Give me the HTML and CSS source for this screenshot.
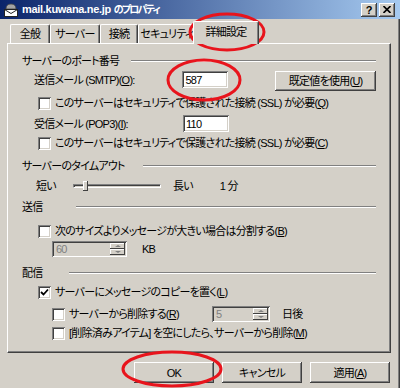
FILE: index.html
```html
<!DOCTYPE html>
<html lang="ja">
<head>
  <meta charset="UTF-8">
  <title>mail.kuwana.ne.jp のプロパティ</title>
  <link rel="stylesheet" href="styles.css">
</head>

<body>
  <div class="window">
    <div class="titlebar">
      <svg class="title-icon" width="16" height="16" viewBox="0 0 16 16">
        <path d="M3 7 Q3 2 8 2 Q13 2 13 7 Z" fill="#a4a4a4" stroke="#444" stroke-width="0.8"/>
        <rect x="1.5" y="7.5" width="13" height="7" fill="#fff" stroke="#222"/>
        <path d="M1.5 7.5 L8 11.5 L14.5 7.5" fill="none" stroke="#222"/>
      </svg>
      <span class="title">mail.kuwana.ne.jp <span class="title-ja">のプロパティ</span></span>
      <div class="caption">
        <span class="cap-btn">?</span>
        <span class="cap-btn">
          <svg width="8" height="7" viewBox="0 0 8 7"><path d="M0.5 0 L7.5 7 M7.5 0 L0.5 7" stroke="#000" stroke-width="1.6"/></svg>
        </span>
      </div>
    </div>

    <div class="tabs">
      <div class="tab tab-general">全般</div>
      <div class="tab tab-server">サーバー</div>
      <div class="tab tab-connect">接続</div>
      <div class="tab tab-security">セキュリティ</div>
      <div class="tab active">詳細設定</div>
    </div>

    <div class="panel">
      <!-- server ports -->
      <div class="group-head">
        <span>サーバーのポート番号</span>
        <div class="rule rule-port"></div>
      </div>
      <div class="port-row smtp">
        <span class="port-label">送信メール (SMTP)(<u>O</u>):</span>
        <div class="edit">587</div>
        <div class="btn default-btn">既定値を使用(<u>U</u>)</div>
      </div>
      <div class="check-row ssl-smtp">
        <span class="checkbox"></span>
        <span>このサーバーはセキュリティで保護された接続 (SSL) が必要(<u>Q</u>)</span>
      </div>
      <div class="port-row pop3">
        <span class="port-label">受信メール (POP3)(<u>I</u>):</span>
        <div class="edit">110</div>
      </div>
      <div class="check-row ssl-pop3">
        <span class="checkbox"></span>
        <span>このサーバーはセキュリティで保護された接続 (SSL) が必要(<u>C</u>)</span>
      </div>

      <!-- timeout -->
      <div class="group-head timeout-head">
        <span>サーバーのタイムアウト</span>
        <div class="rule rule-timeout"></div>
      </div>
      <div class="slider-row">
        <span>短い</span>
        <div class="slider">
          <div class="track"></div>
          <div class="thumb"></div>
        </div>
        <span>長い</span>
        <span class="slider-value">1 分</span>
      </div>

      <!-- sending -->
      <div class="group-head send-head">
        <span>送信</span>
        <div class="rule rule-send"></div>
      </div>
      <div class="check-row split-check">
        <span class="checkbox"></span>
        <span>次のサイズよりメッセージが大きい場合は分割する(<u>B</u>)</span>
      </div>
      <div class="spin-row size-row">
        <div class="spinner size-spin">
          <span class="spin-text">60</span>
          <div class="spin-btns">
            <span class="spin-btn"><i class="up"></i></span>
            <span class="spin-btn"><i class="down"></i></span>
          </div>
        </div>
        <span class="unit">KB</span>
      </div>

      <!-- delivery -->
      <div class="group-head deliver-head">
        <span>配信</span>
        <div class="rule rule-deliver"></div>
      </div>
      <div class="check-row keep-copy">
        <span class="checkbox checked">
          <svg width="9" height="9" viewBox="0 0 9 9"><path d="M1 4 L3.5 6.5 L8 1.5" fill="none" stroke="#000" stroke-width="1.8"/></svg>
        </span>
        <span>サーバーにメッセージのコピーを置く(<u>L</u>)</span>
      </div>
      <div class="check-row sub-row remove-days">
        <div class="sub-label">
          <span class="checkbox"></span>
          <span>サーバーから削除する(<u>R</u>)</span>
        </div>
        <div class="spinner days-spin">
          <span class="spin-text">5</span>
          <div class="spin-btns">
            <span class="spin-btn"><i class="up"></i></span>
            <span class="spin-btn"><i class="down"></i></span>
          </div>
        </div>
        <span class="unit">日後</span>
      </div>
      <div class="check-row sub-row remove-trash">
        <span class="checkbox"></span>
        <span>[削除済みアイテム] を空にしたら、サーバーから削除(<u>M</u>)</span>
      </div>
    </div>

    <div class="dialog-buttons">
      <div class="btn">OK</div>
      <div class="btn">キャンセル</div>
      <div class="btn">適用(<u>A</u>)</div>
    </div>

    <!-- red marks drawn over the screenshot -->
    <svg class="marks" width="400" height="388" viewBox="0 0 400 388">
      <ellipse cx="227" cy="32" rx="37" ry="18"/>
      <ellipse cx="204" cy="80" rx="36" ry="20"/>
      <ellipse cx="172" cy="369" rx="49" ry="17"/>
    </svg>
  </div>
</body>
</html>
```

FILE: styles.css
```css
* {
  box-sizing: border-box;
}

body {
  margin: 0;
  padding: 0;
  font-family: "Liberation Sans", "Noto Sans CJK JP", sans-serif;
  font-size: 11px;
  line-height: 14px;
  letter-spacing: -0.75px;
  font-feature-settings: "palt";
  color: #000;
  background-color: #d4d0c8;
}

u {
  text-decoration: underline;
}

.window {
  position: relative;
  width: 400px;
  height: 388px;
  background-color: #d4d0c8;
  display: flex;
  flex-direction: column;
  overflow: hidden;
  box-shadow: inset -1px 0 #404040, inset -2px 0 #808080;
}

/* title bar */
.titlebar {
  height: 19px;
  display: flex;
  align-items: center;
  padding: 0 5px 0 3px;
  background: linear-gradient(90deg, #0a246a, #a6caf0);
}

.title-icon {
  flex: none;
}

.title {
  margin-left: 3px;
  color: #fff;
  font-weight: bold;
  font-size: 11px;
  letter-spacing: -0.3px;
  white-space: nowrap;
}

.title-ja {
  font-size: 10px;
  letter-spacing: -1.8px;
}

.caption {
  margin-left: auto;
  display: flex;
  gap: 2px;
}

.cap-btn {
  width: 16px;
  height: 14px;
  display: flex;
  align-items: center;
  justify-content: center;
  background-color: #d4d0c8;
  font-weight: bold;
  font-size: 11px;
  letter-spacing: 0;
  box-shadow: inset -1px -1px #404040, inset 1px 1px #fff, inset -2px -2px #808080;
}

/* tabs */
.tabs {
  height: 24px;
  display: flex;
  align-items: flex-end;
  padding-left: 10px;
}

.tab {
  flex: none;
  height: 19px;
  line-height: 18px;
  text-align: center;
  white-space: nowrap;
  border-top: 1px solid #fff;
  border-left: 1px solid #fff;
  border-right: 1px solid #404040;
  border-radius: 2px 2px 0 0;
  box-shadow: inset -1px 0 #808080;
}

.tab-general { width: 40px; }
.tab-server { width: 50px; }
.tab-connect { width: 38px; }
.tab-security { width: 57px; }

.tab.active {
  position: relative;
  z-index: 1;
  width: 66px;
  height: 23px;
  margin: 0 0 -1px -2px;
  line-height: 20px;
  background-color: #d4d0c8;
}

/* panel */
.panel {
  height: 310px;
  margin: 0 9px 0 7px;
  padding: 10px 14px 0 14px;
  border-top: 1px solid #fff;
  border-left: 1px solid #fff;
  border-right: 1px solid #404040;
  border-bottom: 1px solid #404040;
  box-shadow: inset -1px -1px #808080;
}

.group-head {
  height: 14px;
  display: flex;
  align-items: center;
}

.rule {
  flex: 1;
  height: 2px;
  border-top: 1px solid #808080;
  border-bottom: 1px solid #fff;
}

.rule-port { margin-left: 12px; }
.rule-timeout { margin-left: 18px; }
.rule-send { margin-left: 33px; }
.rule-deliver { margin-left: 26px; }

.timeout-head { margin-top: 9px; }
.send-head { margin-top: 7px; }
.deliver-head { margin-top: 9px; }

/* port rows */
.port-row {
  display: flex;
  align-items: flex-start;
  padding-left: 12px;
}

.smtp {
  height: 20px;
  margin-top: 3px;
}

.pop3 {
  height: 17px;
  margin-top: 5px;
}

.port-label {
  width: 149px;
  line-height: 18px;
  white-space: nowrap;
}

.edit {
  width: 46px;
  height: 17px;
  padding: 2px 3px 0;
  line-height: 14px;
  background-color: #fff;
  box-shadow: inset 1px 1px #808080, inset -1px -1px #fff, inset 2px 2px #404040, inset -2px -2px #d4d0c8;
}

.btn {
  height: 21px;
  width: 80px;
  display: flex;
  align-items: center;
  justify-content: center;
  white-space: nowrap;
  background-color: #d4d0c8;
  box-shadow: inset -1px -1px #404040, inset 1px 1px #fff, inset -2px -2px #808080;
}

.default-btn {
  width: 101px;
  height: 20px;
  margin-left: 47px;
}

/* check rows */
.check-row {
  height: 14px;
  display: flex;
  align-items: center;
  padding-left: 16px;
  white-space: nowrap;
}

.checkbox {
  flex: none;
  width: 13px;
  height: 13px;
  margin-right: 4px;
  display: flex;
  align-items: center;
  justify-content: center;
  background-color: #fff;
  box-shadow: inset 1px 1px #808080, inset -1px -1px #fff, inset 2px 2px #404040, inset -2px -2px #d4d0c8;
}

.ssl-smtp { margin-top: 5px; }
.ssl-pop3 { margin-top: 4px; }
.split-check { margin-top: 10px; }
.keep-copy { margin-top: 5px; }

.sub-row {
  padding-left: 30px;
}

.remove-days {
  height: 16px;
  margin-top: 7px;
}

.remove-trash { margin-top: 4px; }

.sub-label {
  width: 160px;
  display: flex;
  align-items: center;
}

/* slider */
.slider-row {
  height: 14px;
  margin-top: 6px;
  padding-left: 14px;
  display: flex;
  align-items: center;
}

.slider {
  position: relative;
  width: 88px;
  height: 12px;
  margin: 0 12px 0 17px;
  display: flex;
  align-items: center;
}

.track {
  width: 100%;
  height: 4px;
  border-top: 1px solid #808080;
  border-left: 1px solid #808080;
  border-bottom: 1px solid #fff;
  border-right: 1px solid #fff;
  box-shadow: inset 1px 1px #404040;
}

.thumb {
  position: absolute;
  left: 10px;
  top: 1px;
  width: 5px;
  height: 10px;
  background-color: #d4d0c8;
  box-shadow: inset -1px -1px #404040, inset 1px 1px #fff;
}

.slider-value {
  margin-left: 27px;
}

/* spinners */
.spin-row {
  height: 16px;
  margin-top: 3px;
  padding-left: 30px;
  display: flex;
  align-items: center;
}

.spinner {
  height: 16px;
  display: flex;
  align-items: stretch;
  padding: 2px;
  background-color: #d4d0c8;
  box-shadow: inset 1px 1px #808080, inset -1px -1px #fff, inset 2px 2px #404040, inset -2px -2px #d4d0c8;
}

.size-spin { width: 75px; }
.days-spin { width: 58px; }

.spin-text {
  flex: 1;
  padding-left: 2px;
  line-height: 12px;
  color: #808080;
}

.spin-btns {
  width: 15px;
  display: flex;
  flex-direction: column;
}

.spin-btn {
  flex: 1;
  display: flex;
  align-items: center;
  justify-content: center;
  box-shadow: inset -1px -1px #404040, inset 1px 1px #fff;
}

.spin-btn i {
  width: 0;
  height: 0;
  border-left: 3px solid transparent;
  border-right: 3px solid transparent;
}

.spin-btn .up { border-bottom: 2px solid #808080; }
.spin-btn .down { border-top: 2px solid #808080; }

.unit {
  margin-left: 12px;
}

.size-row .unit {
  margin-left: 15px;
}

/* bottom buttons */
.dialog-buttons {
  display: flex;
  justify-content: flex-end;
  gap: 8px;
  margin-top: 9px;
  padding-right: 10px;
}

/* red annotation */
.marks {
  position: absolute;
  top: 0;
  left: 0;
  pointer-events: none;
}

.marks ellipse {
  fill: none;
  stroke: #e8141c;
  stroke-width: 3;
}
```
